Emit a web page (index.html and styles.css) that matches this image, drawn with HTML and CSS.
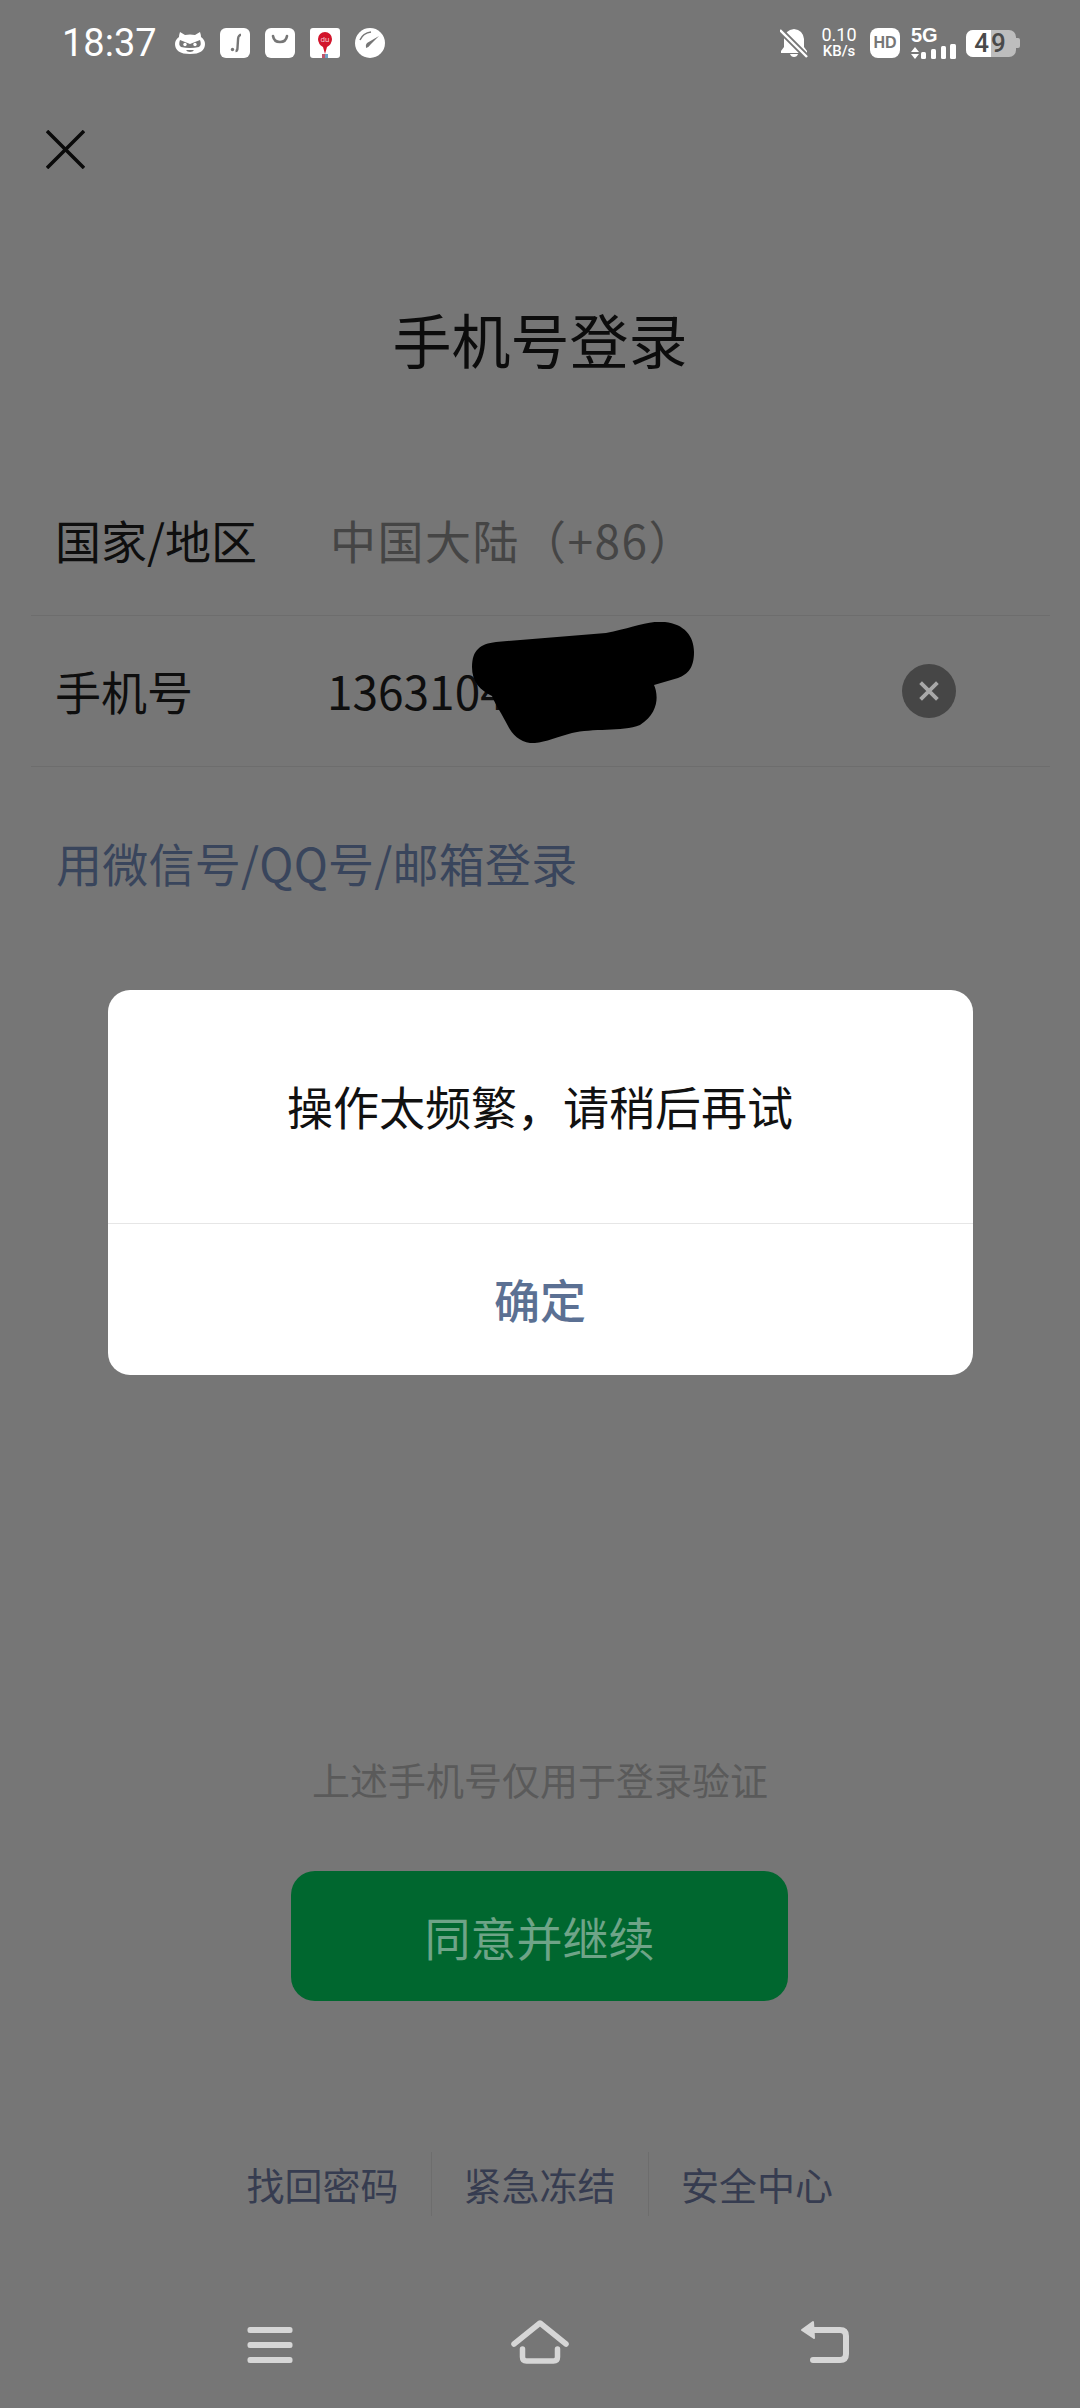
FILE: index.html
```html
<!DOCTYPE html>
<html lang="zh-CN">
<head>
    <meta charset="UTF-8">
    <meta name="viewport" content="width=device-width, initial-scale=1.0">
    <title>手机号登录</title>
    <link rel="stylesheet" href="styles.css">
</head>
<body>
    <div class="page">
        <div class="status-bar">
            <span class="time">18:37</span>
            <div class="app-icons">
                <svg class="app-icon" viewBox="0 0 30 30">
                    <path d="M5 4l5 3q5-1 10 0l5-3q1 3 1 5 4 3 4 7 0 10-15 10T0 16q0-4 4-7 0-2 1-5z" fill="#fff"/>
                    <path d="M5 12q5 2 10 4 5-2 10-4 2 5-1 7-9 2-18 0-3-2-1-7z" fill="#767676"/>
                    <circle cx="10" cy="16.500" r="1.700" fill="#fff"/>
                    <circle cx="20" cy="16.500" r="1.700" fill="#fff"/>
                    <path d="M11 22h8q-1 2-4 2t-4-2z" fill="#767676"/>
                </svg>
                <svg class="app-icon" viewBox="0 0 30 30">
                    <rect width="30" height="30" rx="6" fill="#fff"/>
                    <path d="M21 7h-1q-2 1-2 5l-.5 8q0 3-2 3" fill="none" stroke="#767676" stroke-width="2.400"/>
                    <circle cx="12.500" cy="21.500" r="1.700" fill="#767676"/>
                </svg>
                <svg class="app-icon" viewBox="0 0 30 30">
                    <rect width="30" height="30" rx="6" fill="#fff"/>
                    <path d="M8 8q1 6 7 6t7-6" fill="none" stroke="#767676" stroke-width="2.600" stroke-linecap="round"/>
                </svg>
                <svg class="app-icon" viewBox="0 0 30 30">
                    <rect width="30" height="30" rx="3" fill="#fff"/>
                    <path d="M8 11a7 7 0 0 1 14 0q0 5-5 8l-2 7-2-7q-5-3-5-8z" fill="#d2152c"/>
                    <rect x="12" y="26" width="3" height="4" fill="#c0566a"/>
                    <rect x="15" y="26" width="3" height="4" fill="#6f9fc4"/>
                    <text class="du-text" x="15" y="14">du</text>
                </svg>
                <svg class="app-icon" viewBox="0 0 30 30">
                    <circle cx="15" cy="15" r="15" fill="#fff"/>
                    <path d="M5 12Q8 5 16 4" fill="none" stroke="#767676" stroke-width="1.500"/>
                    <path d="M24 8L16 16q-2 3-5 4-1-3 1-5z" fill="#767676"/>
                </svg>
            </div>
            <div class="status-right">
                <svg class="bell" viewBox="0 0 28 29">
                    <path d="M14 0q9 1 10 10v8l3 4v2H1v-2l3-4v-8Q5 1 14 0z" fill="#fff"/>
                    <path d="M10 25h8q-1 3-4 3t-4-3z" fill="#fff"/>
                    <path d="M0 1l27 27" stroke="#767676" stroke-width="6"/>
                    <path d="M0 1l27 27" stroke="#fff" stroke-width="2.400"/>
                </svg>
                <div class="net-speed">
                    <span class="speed-num">0.10</span>
                    <span class="speed-unit">KB/s</span>
                </div>
                <span class="hd-badge">HD</span>
                <div class="signal">
                    <span class="signal-label">5G</span>
                    <svg class="signal-bars" viewBox="0 0 46 16">
                        <path d="M4 4l4 5H0zM4 16L0 11h8z" fill="#fff"/>
                        <rect x="10" y="9" width="5" height="7" rx="1.500" fill="#fff"/>
                        <rect x="20" y="6" width="5" height="10" rx="1.500" fill="#fff"/>
                        <rect x="30" y="3" width="5" height="13" rx="1.500" fill="#fff"/>
                        <rect x="39" y="1" width="6" height="15" rx="1.500" fill="#fff"/>
                    </svg>
                </div>
                <div class="battery">
                    <div class="battery-body">
                        <div class="battery-fill"></div>
                        <span class="battery-num">49</span>
                    </div>
                    <div class="battery-nub"></div>
                </div>
            </div>
        </div>

        <svg class="close-icon" viewBox="0 0 39 39">
            <path d="M1 1l37 37M38 1L1 38" stroke="#0a0a0a" stroke-width="3.500"/>
        </svg>

        <h1 class="title">手机号登录</h1>

        <div class="form">
            <div class="form-row">
                <span class="row-label">国家/地区</span>
                <span class="row-value">中国大陆（+86）</span>
            </div>
            <div class="form-row">
                <span class="row-label">手机号</span>
                <span class="row-phone">1363104</span>
                <svg class="blob" viewBox="0 0 222 121">
                    <path d="M0 45C0 28 8 22 24 20L134 11C160 6 178-2 193 0 212 2 222 14 222 30 222 46 216 52 206 56L182 63C186 72 188 90 168 103 150 110 120 106 100 111 84 115 70 122 58 121 48 120 40 112 36 104 30 92 24 84 20 74 8 68 0 60 0 45z" fill="#000"/>
                </svg>
                <div class="clear-btn">
                    <svg class="clear-x" viewBox="0 0 20 20">
                        <path d="M3 3l14 14M17 3L3 17" stroke="#a8a8a8" stroke-width="3.200"/>
                    </svg>
                </div>
            </div>
        </div>

        <a class="alt-login">用微信号/QQ号/邮箱登录</a>

        <div class="spacer"></div>

        <p class="hint">上述手机号仅用于登录验证</p>
        <button type="button" class="agree-btn">同意并继续</button>

        <div class="links">
            <a class="link-item">找回密码</a>
            <a class="link-item">紧急冻结</a>
            <a class="link-item">安全中心</a>
        </div>

        <div class="nav-bar">
            <svg class="nav-icon nav-menu" viewBox="0 0 48 44">
                <rect x="1.500" y="7" width="45" height="6" rx="2.500" fill="#d6d6d6"/>
                <rect x="1.500" y="22" width="45" height="6" rx="2.500" fill="#d6d6d6"/>
                <rect x="1.500" y="37" width="45" height="6" rx="2.500" fill="#d6d6d6"/>
            </svg>
            <svg class="nav-icon nav-home" viewBox="0 0 60 44">
                <path d="M4 24L30 3l26 21" fill="none" stroke="#d6d6d6" stroke-width="5.500" stroke-linecap="round" stroke-linejoin="round"/>
                <path d="M12.500 29v8q0 4 4 4h27q4 0 4-4v-8" fill="none" stroke="#d6d6d6" stroke-width="5.500" stroke-linecap="round"/>
            </svg>
            <svg class="nav-icon nav-back" viewBox="0 0 52 44">
                <path d="M3 10L14 2l1 16z" fill="#d6d6d6" stroke="#d6d6d6" stroke-width="2" stroke-linejoin="round"/>
                <path d="M12 10h29q6 0 6 6v18q0 6-6 6H14" fill="none" stroke="#d6d6d6" stroke-width="6" stroke-linecap="round"/>
            </svg>
        </div>

        <div class="overlay">
            <div class="dialog">
                <div class="dialog-msg">操作太频繁，请稍后再试</div>
                <div class="dialog-ok">确定</div>
            </div>
        </div>
    </div>
</body>
</html>
```

FILE: styles.css
```css
* {
    box-sizing: border-box;
    font-family: "Noto Sans CJK SC", "Noto Sans", sans-serif;
}

body {
    margin: 0;
    background-color: #767676;
}

.page {
    position: relative;
    display: flex;
    flex-direction: column;
    width: 1080px;
    height: 2408px;
    overflow: hidden;
    background-color: #767676;
}

/* status bar */
.status-bar {
    display: flex;
    align-items: center;
    height: 86px;
    padding: 0 60px 0 62px;
    color: white;
}

.time {
    width: 113px;
    font-family: Roboto, sans-serif;
    font-size: 38px;
    line-height: 44px;
}

.app-icons {
    display: flex;
    gap: 15px;
}

.app-icon {
    display: block;
    width: 30px;
    height: 30px;
}

.du-text {
    font-family: Roboto, sans-serif;
    font-size: 8px;
    text-anchor: middle;
    fill: #f5c6cc;
}

.status-right {
    display: flex;
    align-items: center;
    margin-left: auto;
}

.bell {
    width: 28px;
    height: 29px;
}

.net-speed {
    display: flex;
    flex-direction: column;
    align-items: center;
    margin-left: 12px;
    width: 38px;
}

.speed-num,
.speed-unit {
    font-family: Roboto, sans-serif;
    line-height: 16px;
}

.speed-num {
    font-size: 18px;
}

.speed-unit {
    font-size: 15px;
    font-weight: 500;
}

.hd-badge {
    width: 30px;
    height: 30px;
    margin-left: 12px;
    border-radius: 8px;
    background-color: white;
    color: #767676;
    font-family: "Liberation Sans", sans-serif;
    font-size: 16px;
    font-weight: 700;
    line-height: 30px;
    text-align: center;
}

.signal {
    display: flex;
    flex-direction: column;
    margin-left: 11px;
    width: 46px;
}

.signal-label {
    font-family: "Liberation Sans", sans-serif;
    font-size: 20px;
    font-weight: 700;
    line-height: 16px;
}

.signal-bars {
    display: block;
    width: 46px;
    height: 16px;
}

.battery {
    display: flex;
    align-items: center;
    margin-left: 9px;
}

.battery-body {
    position: relative;
    width: 50px;
    height: 27px;
    border-radius: 7px;
    background-color: #bdbdbd;
    color: #4a4a4a;
    text-align: center;
}

.battery-fill {
    position: absolute;
    left: 0;
    top: 0;
    bottom: 0;
    width: 25px;
    border-radius: 7px 0 0 7px;
    background-color: white;
}

.battery-num {
    position: relative;
    font-family: Roboto, sans-serif;
    font-size: 26px;
    font-weight: 500;
    line-height: 27px;
    letter-spacing: 2px;
}

.battery-nub {
    width: 4px;
    height: 10px;
    border-radius: 0 2px 2px 0;
    background-color: #bdbdbd;
}

/* header */
.close-icon {
    display: block;
    flex: none;
    width: 39px;
    height: 39px;
    margin: 44px 0 0 46px;
}

.title {
    margin: 130px 0 0;
    color: #0c0c0c;
    font-size: 59px;
    font-weight: 400;
    line-height: 80px;
    text-align: center;
}

/* form */
.form {
    margin: 86px 30px 0 31px;
}

.form-row {
    position: relative;
    display: flex;
    align-items: center;
    height: 151px;
    padding: 0 0 3px 24px;
    border-bottom: 1px solid #6d6d6d;
    font-size: 46px;
}

.row-label {
    width: 272px;
    color: #0e0e0e;
}

.row-value {
    margin-left: 3px;
    color: #454545;
    letter-spacing: 1.500px;
}

.row-phone {
    color: #0e0e0e;
}

.blob {
    position: absolute;
    left: 441px;
    top: 6px;
    width: 222px;
    height: 121px;
}

.clear-btn {
    display: flex;
    align-items: center;
    justify-content: center;
    position: absolute;
    right: 94px;
    top: 48px;
    width: 54px;
    height: 54px;
    border-radius: 50%;
    background-color: #464646;
}

.clear-x {
    width: 24px;
    height: 24px;
}

.alt-login {
    margin: 65px 0 0 56px;
    color: #39455c;
    font-size: 46px;
    letter-spacing: 0.250px;
    line-height: 60px;
}

.spacer {
    flex: 1;
}

/* bottom */
.hint {
    margin: 0;
    color: #5a5a5a;
    font-size: 38px;
    line-height: 50px;
    text-align: center;
}

.agree-btn {
    display: block;
    flex: none;
    width: 497px;
    height: 130px;
    margin: 67px auto 0 291px;
    border: none;
    border-radius: 24px;
    background-color: #00672f;
    color: #6fa488;
    font-size: 46px;
}

.links {
    display: flex;
    justify-content: center;
    margin-top: 151px;
    height: 64px;
}

.link-item {
    width: 217px;
    color: #363c50;
    font-size: 38px;
    line-height: 64px;
    text-align: center;
    border-right: 1px solid #6d6d6d;
}

.link-item:last-child {
    border-right: none;
}

.nav-bar {
    display: flex;
    align-items: center;
    height: 192px;
    padding: 60px 0 0 246px;
}

.nav-icon {
    display: block;
    height: 44px;
}

.nav-menu {
    width: 48px;
}

.nav-home {
    width: 60px;
    margin-left: 216px;
}

.nav-back {
    width: 52px;
    margin-left: 229px;
}

/* dialog */
.overlay {
    position: absolute;
    inset: 0;
    display: flex;
    justify-content: center;
    align-items: flex-start;
    padding-top: 990px;
}

.dialog {
    width: 865px;
    border-radius: 22px;
    background-color: white;
    overflow: hidden;
}

.dialog-msg {
    height: 234px;
    padding-top: 82px;
    color: #111;
    font-size: 46px;
    line-height: 66px;
    text-align: center;
    border-bottom: 1px solid #e6e6e6;
}

.dialog-ok {
    height: 151px;
    color: #5b7093;
    font-size: 46px;
    font-weight: 500;
    line-height: 148px;
    text-align: center;
}
```
